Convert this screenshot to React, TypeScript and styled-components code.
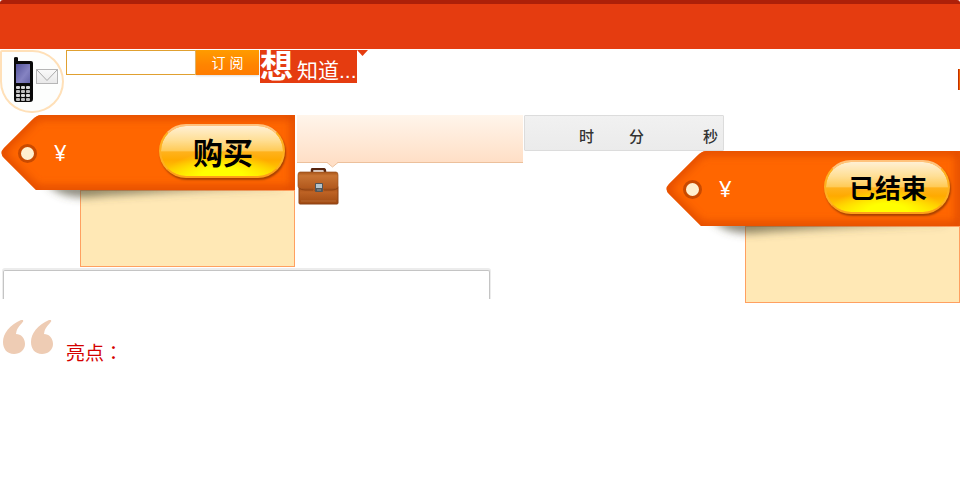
import React, { useId } from "react";
import styled, { createGlobalStyle } from "styled-components";

const GlobalStyle = createGlobalStyle`
  *, *::before, *::after { box-sizing: border-box; }
  body {
    margin: 0;
    background: #fff;
    font-family: "Liberation Sans", "Noto Sans CJK SC", sans-serif;
  }
  button, input { font: inherit; }
`;

const Page = styled.div`
  display: flex;
  flex-direction: column;
`;

const Banner = styled.header`
  height: 49px;
  background: #e53c10;
  border-top: 4px solid #ad2009;
  border-radius: 3px 3px 0 0;
`;

const TopRow = styled.section`
  display: flex;
  align-items: flex-start;
  padding-top: 1px;
  height: 66px;
`;

const PhoneBadge = styled.div`
  width: 64px;
  height: 63px;
  margin-right: 2px;
  border: 2px solid #ffe0b8;
  border-radius: 2px 32px 32px 32px;
  background: #fdfefd;
  svg { display: block; }
`;

const SubscribeForm = styled.form`
  display: flex;
`;

const SubscribeInput = styled.input`
  width: 130px;
  height: 25px;
  padding: 0 4px;
  border: 1px solid #e0a030;
  border-radius: 0;
  background: #fff;
  font-size: 14px;
  outline: none;
`;

const SubscribeButton = styled.button`
  width: 63px;
  height: 25px;
  padding: 1px 0 0;
  border: 0;
  background: linear-gradient(#ff9c00, #ff8400 60%, #ff7c00);
  box-shadow: 0 1px 2px #ddd;
  color: #fff;
  font-size: 14px;
  line-height: 24px;
  word-break: keep-all;
`;

const WonderLink = styled.a`
  display: flex;
  align-items: baseline;
  gap: 4px;
  width: 97px;
  height: 33px;
  margin-left: 1px;
  background: #e53c10;
  color: #fff;
  font-size: 21px;
  line-height: 34px;
  text-decoration: none;
  white-space: nowrap;
  strong { font-size: 33px; }
`;

const CornerMark = styled.span`
  width: 11px;
  height: 6px;
  background: #e53c10;
  clip-path: polygon(0 0, 100% 0, 50% 100%);
`;

const EdgeMark = styled.span`
  width: 2px;
  height: 21px;
  margin: 19px 0 0 auto;
  background: linear-gradient(90deg, #c03000 50%, #f06000 50%);
`;

const Main = styled.main`
  display: flex;
  align-items: flex-start;
  gap: 1px;
`;

const LeftColumn = styled.div`
  flex: none;
`;

const RightColumn = styled.div`
  flex: 1;
  display: flex;
  flex-direction: column;
`;

const DealRow = styled.div`
  display: flex;
  gap: 1px;
`;

const Offer = styled.article<{ $end?: boolean }>`
  display: flex;
  flex-direction: column;
  width: 295px;
  align-self: ${(p) => (p.$end ? "flex-end" : "flex-start")};
`;

const Tag = styled.div`
  position: relative;
  display: flex;
  align-items: center;
  justify-content: space-between;
  height: 75px;
  padding: 0 10px 4px 54px;
  z-index: 1;
`;

const TagArt = styled.svg`
  position: absolute;
  top: 0;
  left: 0;
  z-index: -1;
  pointer-events: none;
`;

const Price = styled.span`
  color: #fff;
  font-family: "Noto Sans", "Noto Sans CJK SC", sans-serif;
  font-size: 22px;
  line-height: 30px;
  padding-top: 2px;
`;

const PillButton = styled.button`
  width: 126px;
  height: 54px;
  padding: 0 0 0 2px;
  border: 2px solid #ffb020;
  border-top-color: #ffc27c;
  border-bottom-color: #ffa018;
  border-radius: 27px;
  background:
    radial-gradient(ellipse 58px 24px at 50% 100%, #ffff00 35%, rgba(255, 240, 0, 0) 100%) padding-box,
    linear-gradient(#fff0d4, #ffdf96 28%, #ffcb58 49%, #ffb21c 52%, #ffaa00 68%, #ffcc00 90%, #ffd800) padding-box,
    #ffb020;
  box-shadow: 1px 2px 2px #a84000;
  color: #000;
  font-family: "Noto Sans CJK SC", sans-serif;
  font-weight: 700;
  line-height: 48px;
`;

const BuyButton = styled(PillButton)`
  font-size: 30px;
`;

const EndedButton = styled(PillButton)`
  font-size: 26px;
`;

const OfferDetails = styled.div`
  width: 215px;
  height: 77px;
  align-self: flex-end;
  border: 1px solid #ffa060;
  background: #ffe8b5;
`;

const SideInfo = styled.div`
  width: 227px;
`;

const Bubble = styled.div`
  position: relative;
  height: 48px;
  margin-left: 1px;
  border-bottom: 1px solid #ecc09c;
  background: linear-gradient(#fff5eb, #ffdfc6);
`;

const BubbleTail = styled.svg`
  position: absolute;
  left: 30px;
  top: 47px;
`;

const Briefcase = styled.svg`
  display: block;
  margin-top: 5px;
  margin-left: 1px;
`;

const Timer = styled.div`
  display: flex;
  align-items: center;
  justify-content: flex-end;
  width: 200px;
  height: 36px;
  padding: 6px 5px 0 0;
  border: 1px solid #dcdcdc;
  border-radius: 1px;
  background: linear-gradient(#f1f1f1, #ebebeb);
  color: #333;
  font-family: "Noto Sans CJK SC", sans-serif;
  font-size: 15px;
  font-weight: 500;
  line-height: 20px;
`;

const TimeUnit = styled.span<{ $width: number }>`
  width: ${(p) => p.$width}px;
  text-align: right;
`;

const Panel = styled.section`
  width: 487px;
  height: 29px;
  margin: 3px 0 0 3px;
  border: 1px solid #c4c4c4;
  border-bottom: 0;
  border-radius: 2px 2px 0 0;
  box-shadow: 0 -1px 0 1px #ececec;
  clip-path: inset(-3px -3px 0 -3px);
`;

const Highlights = styled.section`
  display: flex;
  align-items: flex-start;
  gap: 12px;
  padding: 21px 0 0 3px;
`;

const HighlightsTitle = styled.h2`
  margin: 18px 0 0;
  color: #d40000;
  font-family: "Noto Sans CJK TC", "Noto Sans CJK SC", sans-serif;
  font-size: 19px;
  font-weight: 400;
  line-height: 28px;
`;

const TAG_PATH = "M41 0H295V75H36L4 43Q-1 38 4 33L32 5Q37 0 41 0Z";

function TagShape() {
  const id = useId().replace(/[^a-zA-Z0-9]/g, "");
  return (
    <TagArt width="295" height="96" viewBox="0 0 295 96" aria-hidden="true">
      <defs>
        <clipPath id={`${id}c`}><path d={TAG_PATH} /></clipPath>
        <clipPath id={`${id}d`}><path d="M0 75H295V96H0Z" /></clipPath>
        <filter id={`${id}b`} x="-20%" y="-20%" width="140%" height="140%">
          <feGaussianBlur stdDeviation="4" />
        </filter>
        <filter id={`${id}s`} x="-20%" y="-100%" width="140%" height="300%">
          <feGaussianBlur stdDeviation="4" />
        </filter>
        <linearGradient id={`${id}g`}>
          <stop offset="0" stopColor="#55523c" stopOpacity=".7" />
          <stop offset=".4" stopColor="#55523c" stopOpacity=".6" />
          <stop offset="1" stopColor="#55523c" stopOpacity=".15" />
        </linearGradient>
      </defs>
      <g clipPath={`url(#${id}d)`}>
        <path d="M46 68H284L280 74Q150 77 90 82Q62 84 46 68Z" fill={`url(#${id}g)`} filter={`url(#${id}s)`} />
      </g>
      <path d={TAG_PATH} fill="#ff6600" />
      <g clipPath={`url(#${id}c)`}>
        <path d={TAG_PATH} fill="none" stroke="#df4800" strokeWidth="8" filter={`url(#${id}b)`} />
      </g>
      <circle cx="27.5" cy="38.5" r="8" fill="#fff0cf" stroke="#c94a00" strokeWidth="3" />
    </TagArt>
  );
}

function PhoneIcon() {
  const keys = [0, 1, 2, 3].flatMap((row) => [0, 1, 2].map((col) => ({ row, col })));
  return (
    <svg width="60" height="59" viewBox="0 0 60 59" aria-hidden="true">
      <defs>
        <linearGradient id="screen" x1="0" y1="0" x2="1" y2="1">
          <stop offset="0" stopColor="#55549b" />
          <stop offset=".6" stopColor="#8583c2" />
          <stop offset="1" stopColor="#6665a8" />
        </linearGradient>
        <linearGradient id="mail" x1="0" y1="0" x2="0" y2="1">
          <stop offset="0" stopColor="#fafafa" />
          <stop offset="1" stopColor="#e8e8e8" />
        </linearGradient>
      </defs>
      <path d="M12 6Q12 5 14 5Q16 5 16 6V9H29Q31 9 31 11V47Q31 50 28 50H14Q12 50 12 47Z" fill="#090909" />
      <rect x="14" y="12" width="14" height="19" fill="url(#screen)" />
      {keys.map(({ row, col }) => (
        <rect key={`${row}${col}`} x={14 + col * 5} y={34 + row * 4} width="4" height="3" rx="1" fill={row % 2 ? "#bcbcbc" : "#d8d8d8"} />
      ))}
      <rect x="34.5" y="17.5" width="21" height="14" fill="url(#mail)" stroke="#b6b6b6" />
      <path d="M35 18L45 28.5L55 18" fill="none" stroke="#aaa" />
    </svg>
  );
}

function BriefcaseIcon() {
  return (
    <Briefcase width="42" height="38" viewBox="0 0 42 38" role="img" aria-label="公文包">
      <defs>
        <linearGradient id="leather" x1="0" y1="0" x2="0" y2="1">
          <stop offset="0" stopColor="#a85518" />
          <stop offset=".2" stopColor="#c87433" />
          <stop offset="1" stopColor="#ad5218" />
        </linearGradient>
        <linearGradient id="leatherLow" x1="0" y1="0" x2="0" y2="1">
          <stop offset="0" stopColor="#9e4a14" />
          <stop offset=".35" stopColor="#bd6224" />
          <stop offset="1" stopColor="#a04a12" />
        </linearGradient>
      </defs>
      <path d="M15 5V2Q15 1 16 1H26Q28 1 28 3V5" fill="none" stroke="#58260f" strokeWidth="2.5" />
      <rect x="2" y="18" width="39" height="18" rx="1" fill="url(#leatherLow)" stroke="#8a4216" />
      <path d="M3 4H39Q41 4 41 7V18Q41 21 36 21H27L25 23H18L16 21H6Q1 21 1 18V7Q1 4 3 4Z" fill="url(#leather)" stroke="#985020" strokeWidth=".7" />
      <path d="M2 20Q4 22 8 22H16M27 22H35Q39 22 41 20" fill="none" stroke="#8a3c0e" strokeWidth=".8" />
      <path d="M4 33H39" stroke="#c07a44" strokeWidth=".6" />
      <rect x="18" y="15" width="8" height="9" rx="1" fill="#50565a" />
      <rect x="19" y="16" width="6" height="4" fill="#b4c4cc" />
      <path d="M20 22H24" stroke="#8c9499" />
    </Briefcase>
  );
}

function QuoteIcon() {
  const mark = "M18 0H20Q21 1 19 3Q13 9 13 14C18 14 22 18 22 24C22 30 17 34 11 34C4 34 0 29 0 22C0 13 7 5 18 0Z";
  return (
    <svg width="51" height="35" viewBox="0 0 51 35" fill="#eeccb4" aria-hidden="true">
      <path d={mark} />
      <path d={mark} transform="translate(28 0)" />
    </svg>
  );
}

export default function App() {
  return (
    <>
      <GlobalStyle />
      <Page>
        <Banner />
        <TopRow>
          <PhoneBadge><PhoneIcon /></PhoneBadge>
          <SubscribeForm onSubmit={(e) => e.preventDefault()}>
            <SubscribeInput type="text" aria-label="订阅" />
            <SubscribeButton type="submit">订 阅</SubscribeButton>
          </SubscribeForm>
          <WonderLink href="#"><strong>想</strong>知道...</WonderLink>
          <CornerMark />
          <EdgeMark />
        </TopRow>
        <Main>
          <LeftColumn>
            <DealRow>
              <Offer>
                <Tag>
                  <TagShape />
                  <Price>¥</Price>
                  <BuyButton type="button">购买</BuyButton>
                </Tag>
                <OfferDetails />
              </Offer>
              <SideInfo>
                <Bubble>
                  <BubbleTail width="11" height="6" viewBox="0 0 11 6" aria-hidden="true">
                    <path d="M0 0L5.5 5L11 0Z" fill="#ffdfc6" />
                    <path d="M0 .5L5.5 5L11 .5" fill="none" stroke="#ecc09c" />
                  </BubbleTail>
                </Bubble>
                <BriefcaseIcon />
              </SideInfo>
            </DealRow>
            <Panel />
            <Highlights>
              <QuoteIcon />
              <HighlightsTitle>亮点：</HighlightsTitle>
            </Highlights>
          </LeftColumn>
          <RightColumn>
            <Timer>
              <TimeUnit $width={50}>时</TimeUnit>
              <TimeUnit $width={50}>分</TimeUnit>
              <TimeUnit $width={74}>秒</TimeUnit>
            </Timer>
            <Offer $end>
              <Tag>
                <TagShape />
                <Price>¥</Price>
                <EndedButton type="button" disabled>已结束</EndedButton>
              </Tag>
              <OfferDetails />
            </Offer>
          </RightColumn>
        </Main>
      </Page>
    </>
  );
}
